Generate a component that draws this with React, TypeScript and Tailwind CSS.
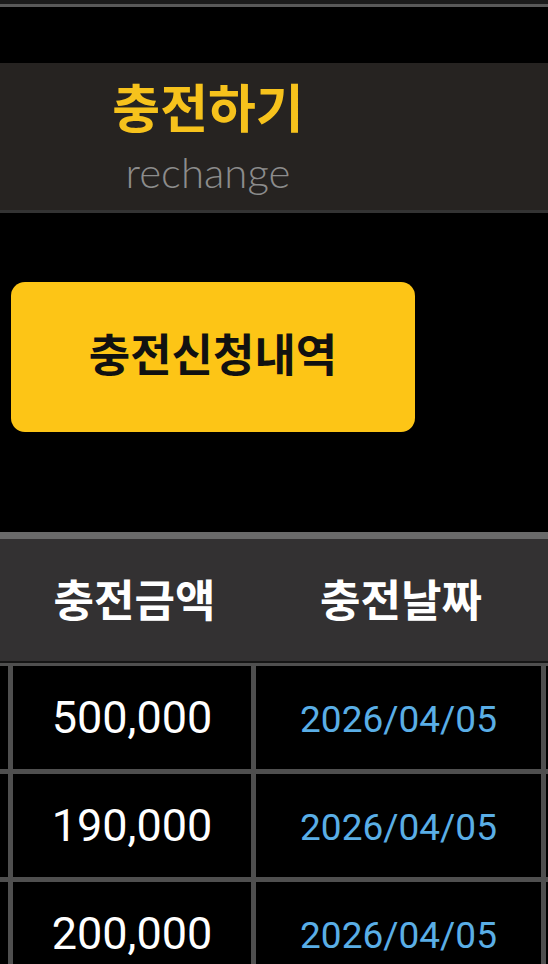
const rows = [
  { amount: "500,000", date: "2026/04/05" },
  { amount: "190,000", date: "2026/04/05" },
  { amount: "200,000", date: "2026/04/05" },
];

export default function App() {
  return (
    <div
      className="w-[548px] h-[964px] overflow-hidden bg-black"
      style={{ fontFamily: 'Roboto, "Noto Sans CJK KR", sans-serif' }}
    >
      {/* top app bar edge */}
      <div className="h-[4px] bg-[#1b1b1b]" />
      <div className="h-[3px] bg-[#595959]" />
      <div className="h-[56px]" />

      {/* page heading band */}
      <div className="h-[147px] bg-[#262321] flex">
        <div className="w-[416px] flex flex-col items-center">
          <div className="mt-[16px] text-[52px] leading-[64px] font-bold text-[#f6c21c]">
            충전하기
          </div>
          <div
            className="mt-[6px] text-[42px] leading-[46px] text-[#8c8c8c]"
            style={{ fontFamily: 'Lato, Roboto, sans-serif', fontWeight: 300 }}
          >
            rechange
          </div>
        </div>
      </div>
      <div className="h-[3px] bg-[#333333]" />

      {/* history button */}
      <div className="pt-[69px] pl-[11px]">
        <button className="w-[404px] h-[150px] rounded-[14px] bg-[#fdc516] flex items-center justify-center">
          <span className="text-[45px] font-bold text-[#111111]">충전신청내역</span>
        </button>
      </div>

      {/* history table */}
      <div className="mt-[100px] h-[7px] bg-[#6a6a6a]" />
      <div className="h-[122px] bg-[#333132] grid grid-cols-[13px_243px_290px_2px] items-center pt-[4px]">
        <div />
        <div className="text-center text-[44px] font-bold text-white">충전금액</div>
        <div className="text-center text-[44px] font-bold text-white">충전날짜</div>
        <div />
      </div>
      <div className="h-[2px] bg-[#151515]" />
      <div className="grid grid-cols-[8px_238px_285px_2px] gap-[5px] bg-[#4f4f4f] pt-[3px]">
        {rows.map((r, i) => (
          <div key={i} className="contents">
            <div className="h-[103px] bg-black" />
            <div className="h-[103px] bg-black flex items-center justify-center text-[45px] text-white">
              {r.amount}
            </div>
            <div className="h-[103px] bg-black flex items-center justify-center pt-[4px] text-[37px] text-[#5aaee6]">
              {r.date}
            </div>
            <div className="h-[103px] bg-black" />
          </div>
        ))}
      </div>
    </div>
  );
}
